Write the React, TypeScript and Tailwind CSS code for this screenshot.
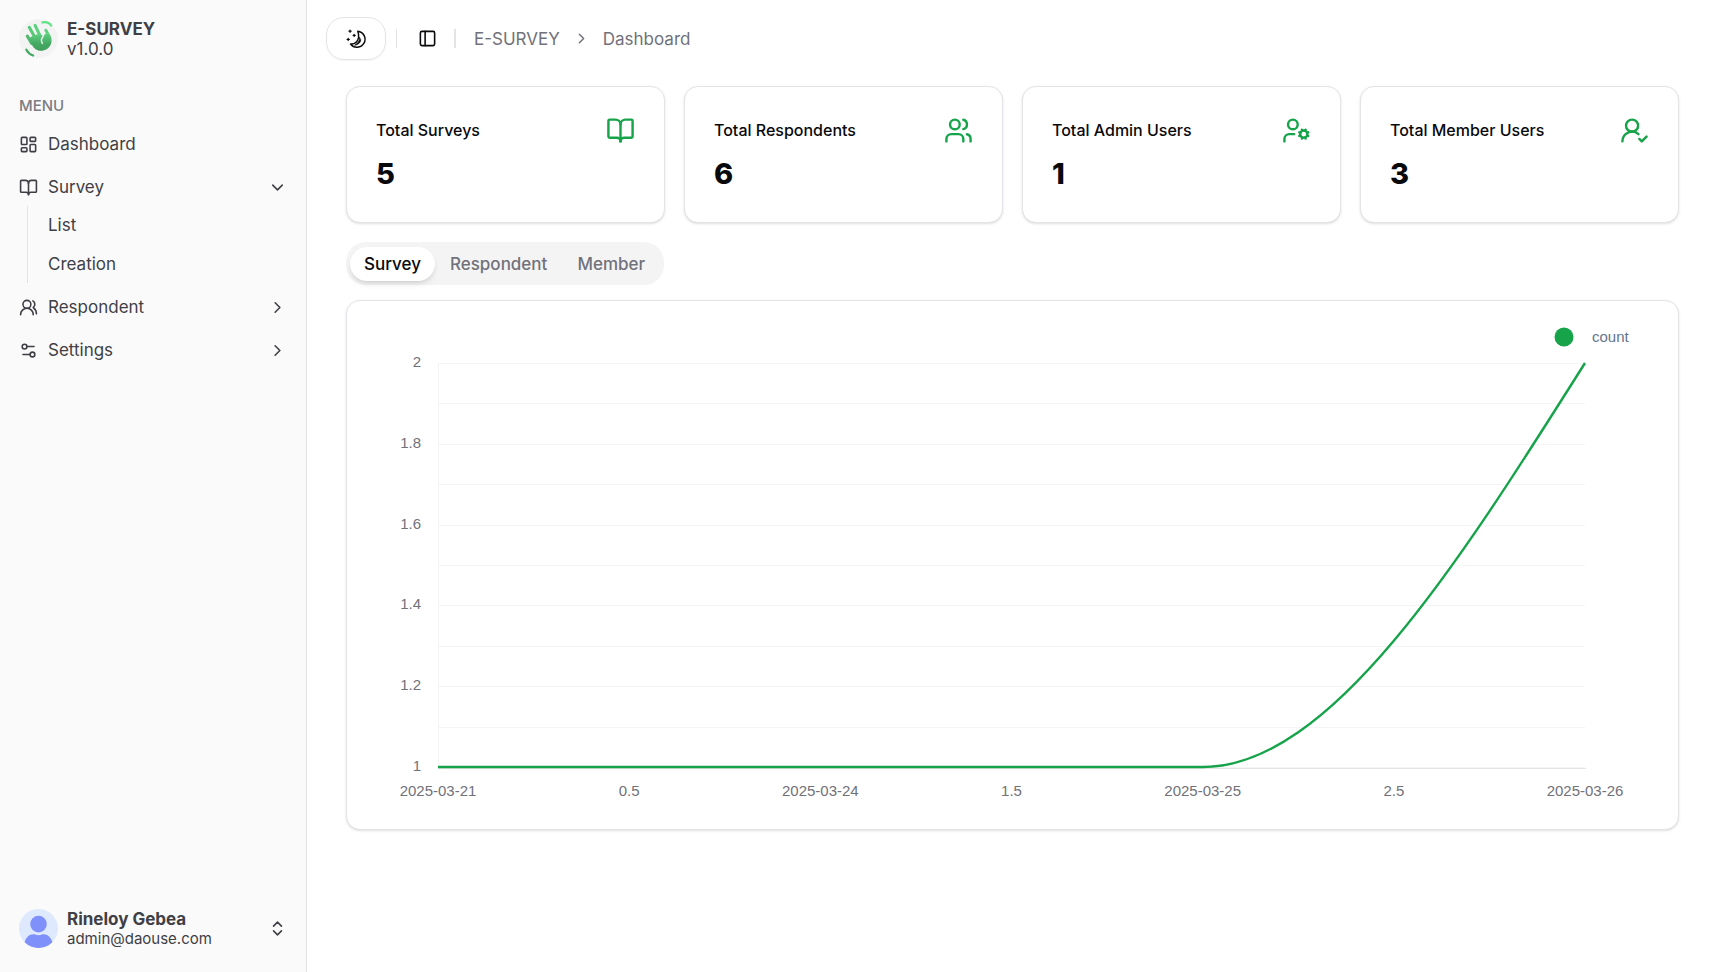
import { useState, type ReactNode } from "react";
import {
  BookOpen,
  ChevronDown,
  ChevronRight,
  ChevronsUpDown,
  LayoutDashboard,
  PanelLeft,
  Settings2,
  UserCog,
  UserRoundCheck,
  Users,
  UsersRound,
  type LucideIcon,
} from "lucide-react";

function LogoMark() {
  return (
    <svg viewBox="0 0 40 40" className="size-[39px] shrink-0" aria-hidden="true">
      <defs>
        <linearGradient id="palm" x1="0" y1="0" x2="0" y2="1">
          <stop offset="0" stopColor="#5fd07f" />
          <stop offset="0.6" stopColor="#43a862" />
          <stop offset="1" stopColor="#3f9f5c" />
        </linearGradient>
      </defs>
      <circle cx="20" cy="20" r="20" fill="#f3f3f4" />
      <g fill="none" strokeLinecap="round" strokeLinejoin="round">
        <path d="M8.500 17.500 13 25" stroke="#4fba6d" strokeWidth="3.2" />
        <path d="M10.500 8.500 17 20" stroke="#56c976" strokeWidth="3.200" />
        <path d="M16.500 6.500 21.500 17" stroke="#5bd37c" strokeWidth="3.200" />
        <path d="M27.500 11.500 29.500 15 31 18" stroke="#5bd37c" strokeWidth="3" />
      </g>
      <path
        d="M10 20 13 18 19.500 15.500 22 15.500c1.600 2.500 3.500 1.500 4.500-.5L31.500 16c2 3 2.700 7 1 10.500-2.200 5-8.500 7.500-13.500 5.500-3.500-1.500-5-4-6.500-7z"
        fill="url(#palm)"
      />
      <path d="M25.500 14c1.500 3-2.800 4.500-2.500 8 .1 1.500.6 2.500 1 3" fill="none" stroke="#f3f3f4" strokeWidth="1.500" strokeLinecap="round" />
      <path d="M24 3.500c3.500-.8 7 .2 9 3.300" fill="none" stroke="#5fe384" strokeWidth="2.200" strokeLinecap="round" />
      <path d="M7.500 31.500c1.700 3 4 5 7 6" fill="none" stroke="#3fa75e" strokeWidth="2.200" strokeLinecap="round" />
    </svg>
  );
}

function Avatar() {
  return (
    <svg viewBox="0 0 40 40" className="size-[39px] shrink-0" aria-hidden="true">
      <defs>
        <clipPath id="avatar-clip">
          <circle cx="20" cy="20" r="20" />
        </clipPath>
      </defs>
      <g clipPath="url(#avatar-clip)">
        <rect width="40" height="40" fill="#dfe9fe" />
        <circle cx="20" cy="15.500" r="8.500" fill="#7f90fb" />
        <path d="M5.500 35c1.500-6 5-9 9-9 2 0 3.500.8 5.500.8s3.500-.8 5.500-.8c4 0 7.500 3 9 9v5h-29z" fill="#7f90fb" />
      </g>
    </svg>
  );
}

function MoonIcon() {
  return (
    <svg viewBox="0 0 24 24" className="size-[22px]" fill="none" stroke="currentColor" strokeLinecap="round" strokeLinejoin="round" aria-hidden="true">
      <path d="M14 3.500a8.800 8.800 0 1 1-8 14c5.500.5 11-4.500 8-14z" strokeWidth="1.600" />
      <path d="M15.800 10.500c.4 3.500-2.300 6.500-5.300 8.300 3.500-.3 6-2.300 6.700-5.300z" fill="currentColor" strokeWidth="0.800" />
      <path d="M5.500 2.300v2.400M4.300 3.500h2.400M10 6.800v2.400M8.800 8h2.400M3.500 11.300v2.400M2.300 12.500h2.400" strokeWidth="1.300" />
    </svg>
  );
}

function NavRow({ icon: Icon, label, open }: { icon: LucideIcon; label: string; open?: boolean }) {
  const Chevron = open ? ChevronDown : ChevronRight;
  return (
    <button type="button" aria-expanded={open} className="flex h-[38px] w-full items-center gap-[10px] px-[10px] text-left">
      <Icon className="size-[19px] shrink-0" />
      <span className="flex-1">{label}</span>
      <Chevron className="size-[19px] shrink-0" />
    </button>
  );
}

function Sidebar() {
  return (
    <aside className="flex w-[307px] shrink-0 flex-col border-r border-[#e4e4e7] bg-[#fafafa] px-[9px] text-[17px] leading-6 text-[#3f3f46]">
      <div className="flex h-[77px] items-center gap-[9px] px-[10px]">
        <LogoMark />
        <div className="leading-5">
          <div className="font-bold">E-SURVEY</div>
          <div>v1.0.0</div>
        </div>
      </div>
      <nav className="mt-[10px] flex-1" aria-label="Menu">
        <h2 className="flex h-[38px] items-center px-[10px] text-[15px] font-medium text-[#7c7c82]">MENU</h2>
        <ul className="flex flex-col gap-[5px]">
          <li>
            <a href="#dashboard" className="flex h-[38px] items-center gap-[10px] px-[10px]">
              <LayoutDashboard className="size-[19px] shrink-0" />
              Dashboard
            </a>
          </li>
          <li>
            <NavRow icon={BookOpen} label="Survey" open />
            <ul className="ml-[18px] flex flex-col gap-[5px] border-l border-[#e4e4e7] py-[2px] pl-5">
              <li>
                <a href="#list" className="flex h-[34px] items-center">List</a>
              </li>
              <li>
                <a href="#creation" className="flex h-[34px] items-center">Creation</a>
              </li>
            </ul>
          </li>
          <li>
            <NavRow icon={UsersRound} label="Respondent" open={false} />
          </li>
          <li>
            <NavRow icon={Settings2} label="Settings" open={false} />
          </li>
        </ul>
      </nav>
      <button type="button" className="mb-[15px] flex h-[58px] items-center gap-[9px] px-[10px] text-left">
        <Avatar />
        <span className="flex flex-1 flex-col pt-[2px] leading-5">
          <span className="font-bold">Rineloy Gebea</span>
          <span className="text-[15px] leading-5">admin@daouse.com</span>
        </span>
        <ChevronsUpDown className="size-[19px] shrink-0" />
      </button>
    </aside>
  );
}

function TopBar() {
  return (
    <header className="flex h-[77px] items-center pl-[19px]">
      <button type="button" aria-label="Toggle theme" className="flex h-[43px] w-[60px] items-center justify-center rounded-[18px] border border-[#e4e4e7] shadow-xs">
        <MoonIcon />
      </button>
      <span className="ml-[10px] h-[19px] w-px bg-[#e4e4e7]" />
      <button type="button" aria-label="Toggle sidebar" className="ml-[13px] flex size-[34px] items-center justify-center">
        <PanelLeft className="size-[19px]" />
      </button>
      <span className="ml-[10px] h-[19px] w-[2px] bg-[#e4e4e7]" />
      <nav aria-label="Breadcrumb" className="ml-[18px]">
        <ol className="flex items-center gap-[13px] text-[17px] leading-6 text-[#71717a]">
          <li>
            <a href="#home">E-SURVEY</a>
          </li>
          <li aria-hidden="true">
            <ChevronRight className="size-[17px]" />
          </li>
          <li aria-current="page">Dashboard</li>
        </ol>
      </nav>
    </header>
  );
}

function StatCard({ title, value, icon: Icon }: { title: string; value: number; icon: LucideIcon }) {
  return (
    <section className="flex h-[137px] flex-col rounded-[14px] border border-[#e4e4e7] bg-white px-[29px] pt-[29px] shadow-sm">
      <div className="flex items-center justify-between">
        <h3 className="pb-[2px] text-base font-medium">{title}</h3>
        <Icon className="size-[29px] text-[#16a34a]" />
      </div>
      <p className="mt-[11px] text-[29px] leading-9 font-extrabold">{value}</p>
    </section>
  );
}

const tabs = ["Survey", "Respondent", "Member"];

function Tabs() {
  const [active, setActive] = useState("Survey");
  return (
    <div role="tablist" className="flex h-[43px] w-fit items-center rounded-[20px] bg-[#f4f4f5] px-1 text-[17px] leading-6 font-medium">
      {tabs.map((tab) => (
        <button
          key={tab}
          type="button"
          role="tab"
          aria-selected={tab === active}
          onClick={() => setActive(tab)}
          className={
            tab === active
              ? "h-[34px] rounded-[17px] bg-white px-[14px] text-[#09090b] shadow-md"
              : "h-[34px] rounded-[17px] px-[15px] text-[#71717a]"
          }
        >
          {tab}
        </button>
      ))}
    </div>
  );
}

const plot = { left: 91, right: 1238, top: 62, bottom: 466 };
const yTicks = ["2", "1.8", "1.6", "1.4", "1.2", "1"];
const xTicks = ["2025-03-21", "0.5", "2025-03-24", "1.5", "2025-03-25", "2.5", "2025-03-26"];

function LineChart() {
  const rowStep = (plot.bottom - plot.top) / 10;
  const colStep = (plot.right - plot.left) / (xTicks.length - 1);
  const bend = plot.left + colStep * 4;
  const third = (plot.right - bend) / 3;
  const half = plot.top + (plot.bottom - plot.top) / 2;
  const gridLines: ReactNode[] = [];
  for (let i = 0; i <= 10; i++) {
    const y = Math.round(plot.top + rowStep * i) + 0.5;
    gridLines.push(<line key={i} x1={plot.left} x2={plot.right} y1={y} y2={y} />);
  }
  return (
    <svg viewBox="0 0 1331 528" className="block w-full" role="img" aria-label="Survey count by date">
      <g stroke="#f4f4f5" strokeWidth="1">
        {gridLines}
        <line x1={plot.left + 0.5} x2={plot.left + 0.5} y1={plot.top} y2={plot.bottom} />
      </g>
      <line x1={plot.left} x2={plot.right + 1} y1="467.500" y2="467.500" stroke="#e4e4e7" />
      <path
        d={`M${plot.left} ${plot.bottom}H${bend}C${bend + third} ${plot.bottom} ${plot.right - third} ${half} ${plot.right} ${plot.top}`}
        fill="none"
        stroke="#16a34a"
        strokeWidth="2.400"
      />
      <g className="font-['Liberation_Sans',sans-serif] text-[15px]" fill="#71717a">
        {yTicks.map((tick, i) => (
          <text key={tick} x="74" y={plot.top + rowStep * 2 * i + 4} textAnchor="end">
            {tick}
          </text>
        ))}
        {xTicks.map((tick, i) => (
          <text key={tick} x={plot.left + colStep * i} y="495" textAnchor="middle">
            {tick}
          </text>
        ))}
        <circle cx="1217" cy="36" r="9.500" fill="#16a34a" />
        <text x="1245" y="41" fill="#64748b">
          count
        </text>
      </g>
    </svg>
  );
}

export default function App() {
  return (
    <div className="flex min-h-screen bg-white font-['Inter',sans-serif] text-[#09090b]">
      <Sidebar />
      <div className="min-w-0 flex-1">
        <TopBar />
        <main className="flex flex-col pt-[9px] pr-[38px] pl-[39px]">
          <div className="grid grid-cols-4 gap-[19px]">
            <StatCard title="Total Surveys" value={5} icon={BookOpen} />
            <StatCard title="Total Respondents" value={6} icon={Users} />
            <StatCard title="Total Admin Users" value={1} icon={UserCog} />
            <StatCard title="Total Member Users" value={3} icon={UserRoundCheck} />
          </div>
          <div className="mt-[19px]">
            <Tabs />
          </div>
          <section className="mt-[15px] rounded-[14px] border border-[#e4e4e7] bg-white shadow-sm">
            <LineChart />
          </section>
        </main>
      </div>
    </div>
  );
}
